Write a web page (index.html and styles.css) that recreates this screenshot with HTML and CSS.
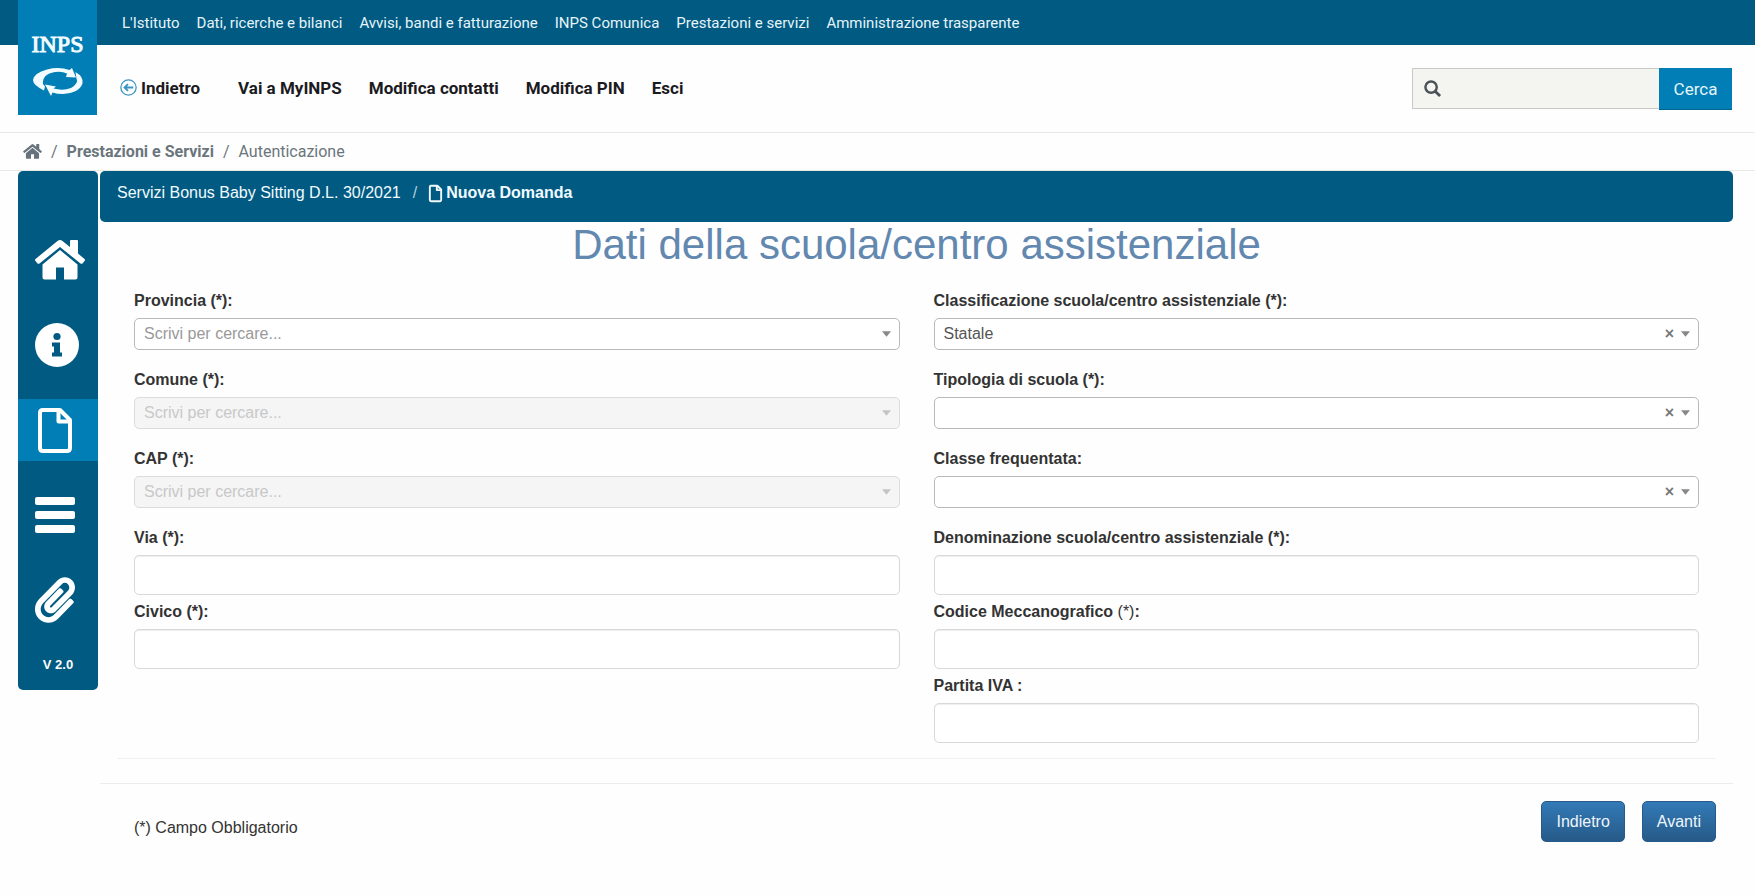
FILE: index.html
```html
<!DOCTYPE html>
<html lang="it">
<head>
<meta charset="utf-8">
<title>INPS - Bonus Baby Sitting</title>
<link rel="stylesheet" href="styles.css">
</head>
<body>
<header class="site-header">
  <a class="logo" href="#" aria-label="INPS">
    <span class="logo-name">INPS</span>
    <svg class="logo-mark" viewBox="0 0 50 28" fill="currentColor" aria-hidden="true">
      <path d="M10 16Q9 6 22 4Q29 3 34 5.500L33 9L43 9.500L39 0L36.500 2Q26-1.500 14 1.500Q1 5 0 12Q0 17 11 22.500L12 18.500Z"/>
      <path d="M42.500 4Q51 9 49.500 15.500Q46 25 30 26Q24 26 19.500 24.500L18 28L12 16.500L23 18.500L20.500 20.500Q30 23 38 20Q46 15 43.500 10.500Z"/>
    </svg>
  </a>
  <nav class="top-nav" aria-label="Istituzionale">
    <a href="#">L'Istituto</a>
    <a href="#">Dati, ricerche e bilanci</a>
    <a href="#">Avvisi, bandi e fatturazione</a>
    <a href="#">INPS Comunica</a>
    <a href="#">Prestazioni e servizi</a>
    <a href="#">Amministrazione trasparente</a>
  </nav>
  <div class="main-bar">
    <nav class="user-nav" aria-label="Utente">
      <a class="back-link" href="#"><svg class="back-icon" viewBox="0 0 16 16" fill="none" stroke="currentColor" stroke-width="1.200" aria-hidden="true"><circle cx="8" cy="8" r="7.200"/><path stroke-width="1.800" d="M12.500 8H4.500M7.500 4.800 4.300 8l3.200 3.200"/></svg>Indietro</a>
      <a href="#">Vai a MyINPS</a>
      <a href="#">Modifica contatti</a>
      <a href="#">Modifica PIN</a>
      <a href="#">Esci</a>
    </nav>
    <form class="search">
      <label class="search-box">
        <svg class="search-icon" viewBox="0 0 18 18" fill="none" stroke="currentColor" aria-hidden="true"><circle cx="7.500" cy="7.500" r="6" stroke-width="2.600"/><path d="M11.800 11.800 17 17" stroke-width="3"/></svg>
        <input type="search" aria-label="Cerca nel sito">
      </label>
      <button type="button">Cerca</button>
    </form>
  </div>
</header>

<nav class="breadcrumb" aria-label="Percorso">
  <a href="#" aria-label="Home"><svg class="crumb-home" viewBox="0 0 50 40" aria-hidden="true"><use href="#house"/></svg></a>
  <span>/</span>
  <a class="crumb-strong" href="#">Prestazioni e Servizi</a>
  <span>/</span>
  <span>Autenticazione</span>
</nav>

<div class="page">
  <nav class="sidebar" aria-label="Menu servizio">
    <a href="#" aria-label="Home"><svg class="icon-house" viewBox="0 0 50 40" fill="currentColor"><g id="house"><path d="M22.500 1 Q25 -1 27.500 1 L35 7 V1 Q35 0 36 0 H42 Q43 0 43 1 V13.500 L49.500 19 Q50.500 20 49.500 21 L47.500 23.500 Q46.500 24 45.500 23.500 L25 7 L4.500 23.500 Q3.500 24 2.500 23.500 L.5 21 Q-.5 20 .5 19 Z"/><path d="M25 10 L42.500 24.500 V37.500 Q42.500 39.500 40.500 39.500 H29 V27.500 H21 V39.500 H9.500 Q7.500 39.500 7.500 37.500 V24.500 Z"/></g></svg></a>
    <a href="#" aria-label="Informazioni"><svg class="icon-info" viewBox="0 0 44 44"><circle cx="22" cy="22" r="22" fill="currentColor"/><g class="cutout"><circle cx="22" cy="13.500" r="3.600"/><path d="M17 19.500H25V29.500H27V33.500H17V29.500H19V23.500H17Z"/></g></svg></a>
    <a class="active" href="#" aria-label="Nuova domanda"><svg class="icon-file" viewBox="0 0 34 45" fill="none" stroke="currentColor" stroke-width="4" stroke-linejoin="round"><path id="sheet" d="M5 2H22L32 12V40Q32 43 29 43H5Q2 43 2 40V5Q2 2 5 2Z"/><path d="M20.500 3V13.500H31"/></svg></a>
    <a href="#" aria-label="Elenco domande"><svg class="icon-bars" viewBox="0 0 40 36" fill="currentColor"><rect width="40" height="8" rx="2"/><rect y="14" width="40" height="8" rx="2"/><rect y="28" width="40" height="8" rx="2"/></svg></a>
    <a href="#" aria-label="Allegati"><svg class="icon-clip" viewBox="0 0 448 512" fill="currentColor"><path d="M43.246 466.142c-58.430-60.289-57.341-157.511 1.386-217.581L254.392 34c44.316-45.332 116.351-45.336 160.671 0 43.890 44.894 43.943 117.329 0 162.276L232.214 383.128c-29.855 30.537-78.633 30.111-107.982-.998-28.275-29.970-27.368-77.473 1.452-106.953l143.743-146.835c6.182-6.314 16.312-6.422 22.626-.241l22.861 22.379c6.315 6.182 6.422 16.312.241 22.626L171.427 319.927c-4.932 5.045-5.236 13.428-.648 18.292 4.372 4.634 11.245 4.711 15.688.165l182.849-186.851c19.613-20.062 19.613-52.725-.011-72.798-19.189-19.627-49.957-19.637-69.154 0L90.390 293.295c-34.763 35.560-35.299 93.120-1.191 128.313 34.010 35.093 88.985 35.137 123.058.286l172.060-175.999c6.177-6.319 16.307-6.433 22.626-.256l22.877 22.364c6.319 6.177 6.434 16.307.256 22.626l-172.060 175.998c-59.576 60.938-155.943 60.216-214.770-.485z"/></svg></a>
    <span class="version">V 2.0</span>
  </nav>

  <main class="content">
    <div class="service-bar">
      <span>Servizi Bonus Baby Sitting D.L. 30/2021</span>
      <span class="slash">/</span>
      <strong><svg class="bar-file" viewBox="0 0 34 45" fill="none" stroke="currentColor" stroke-width="5" stroke-linejoin="round" aria-hidden="true"><use href="#sheet"/><path d="M20.500 3V13.500H31"/></svg>Nuova Domanda</strong>
    </div>
    <h1>Dati della scuola/centro assistenziale</h1>
    <form>
      <div class="columns">
        <div class="column">
          <div class="field field-select">
            <label for="provincia">Provincia (*):</label>
            <div class="combo"><select id="provincia" class="hint"><option>Scrivi per cercare...</option></select><svg class="caret" viewBox="0 0 10 6"><path d="M0 0H10L5 6Z"/></svg></div>
          </div>
          <div class="field field-select">
            <label for="comune">Comune (*):</label>
            <div class="combo"><select id="comune" disabled><option>Scrivi per cercare...</option></select><svg class="caret" viewBox="0 0 10 6"><path d="M0 0H10L5 6Z"/></svg></div>
          </div>
          <div class="field field-select">
            <label for="cap">CAP (*):</label>
            <div class="combo"><select id="cap" disabled><option>Scrivi per cercare...</option></select><svg class="caret" viewBox="0 0 10 6"><path d="M0 0H10L5 6Z"/></svg></div>
          </div>
          <div class="field">
            <label for="via">Via (*):</label>
            <input id="via" type="text">
          </div>
          <div class="field">
            <label for="civico">Civico (*):</label>
            <input id="civico" type="text">
          </div>
        </div>
        <div class="column">
          <div class="field field-select">
            <label for="classificazione">Classificazione scuola/centro assistenziale (*):</label>
            <div class="combo"><select id="classificazione"><option>Statale</option></select><button class="clear" type="button" aria-label="Cancella">×</button><svg class="caret" viewBox="0 0 10 6"><path d="M0 0H10L5 6Z"/></svg></div>
          </div>
          <div class="field field-select">
            <label for="tipologia">Tipologia di scuola (*):</label>
            <div class="combo"><select id="tipologia"><option></option></select><button class="clear" type="button" aria-label="Cancella">×</button><svg class="caret" viewBox="0 0 10 6"><path d="M0 0H10L5 6Z"/></svg></div>
          </div>
          <div class="field field-select">
            <label for="classe">Classe frequentata:</label>
            <div class="combo"><select id="classe"><option></option></select><button class="clear" type="button" aria-label="Cancella">×</button><svg class="caret" viewBox="0 0 10 6"><path d="M0 0H10L5 6Z"/></svg></div>
          </div>
          <div class="field">
            <label for="denominazione">Denominazione scuola/centro assistenziale (*):</label>
            <input id="denominazione" type="text">
          </div>
          <div class="field">
            <label for="codice">Codice Meccanografico <span class="light">(*)</span>:</label>
            <input id="codice" type="text">
          </div>
          <div class="field">
            <label for="piva">Partita IVA :</label>
            <input id="piva" type="text">
          </div>
        </div>
      </div>
      <div class="form-footer">
        <p>(*) Campo Obbligatorio</p>
        <div class="actions">
          <button type="button">Indietro</button>
          <button type="button">Avanti</button>
        </div>
      </div>
    </form>
  </main>
</div>
</body>
</html>
```
FILE: styles.css
```css
* { box-sizing: border-box; }

body {
  margin: 0;
  background: #fefefe;
  color: #333;
  font: 16px/22px "Liberation Sans", Arial, sans-serif;
}

a { color: inherit; text-decoration: none; }
svg { display: block; flex: none; overflow: visible; }

.site-header {
  position: relative;
  font-family: Roboto, sans-serif;
  border-bottom: 1px solid #e8e8e4;
}

.logo {
  position: absolute;
  top: 0;
  left: 18px;
  width: 79px;
  height: 115px;
  padding-top: 28px;
  display: flex;
  flex-direction: column;
  align-items: center;
  gap: 8px;
  background: #007eb5;
  color: #f2fbff;
}
.logo-name { font: 24px/32px "Liberation Serif", serif; -webkit-text-stroke: 1px currentColor; }
.logo-mark { width: 50px; height: 28px; }

.top-nav {
  height: 45px;
  padding-left: 122px;
  display: flex;
  align-items: center;
  gap: 17px;
  background: #005a82;
  color: #e6f4fa;
  font-size: 15px;
}

.main-bar {
  height: 87px;
  padding: 0 23px 0 120px;
  display: flex;
  align-items: center;
  justify-content: space-between;
}
.user-nav {
  display: flex;
  gap: 27px;
  padding-bottom: 2px;
  color: #1b1b1f;
  font-size: 17px;
  font-weight: 700;
}
.back-link { display: flex; align-items: center; gap: 4px; margin-right: 11px; }
.back-icon { width: 17px; height: 17px; color: #3d94c2; }

.search { display: flex; align-items: flex-start; }
.search-box {
  height: 41px;
  width: 247px;
  padding-left: 11px;
  display: flex;
  align-items: center;
  border: 1px solid #c9cac6;
  border-right: 0;
  background: #f4f5f0;
}
.search-icon { width: 17px; height: 17px; color: #4b5257; }
.search-box input { flex: 1; min-width: 0; border: 0; background: none; font: inherit; outline: 0; }
.search button {
  height: 42px;
  width: 73px;
  padding: 2px 0 0;
  border: 0;
  border-bottom: 1px solid #00658f;
  background: #007eb5;
  color: #e6f4fa;
  font: 17px/22px Roboto, sans-serif;
}

.breadcrumb {
  height: 38px;
  padding-left: 23px;
  display: flex;
  align-items: center;
  gap: 9px;
  border-bottom: 1px solid #e8e8e4;
  color: #6b757c;
  font-family: Roboto, sans-serif;
}
.crumb-home { width: 19px; height: 15px; fill: #66727c; }
.crumb-strong { font-weight: 700; }

.page { display: flex; align-items: flex-start; gap: 2px; padding: 0 22px 0 18px; }

.sidebar {
  width: 80px;
  flex: none;
  padding: 58px 0 14px;
  display: flex;
  flex-direction: column;
  gap: 23px;
  border-radius: 5px;
  background: #005a82;
  color: #fff;
}
.sidebar a { height: 62px; padding-left: 17px; display: flex; align-items: center; }
.sidebar .active { padding-left: 20px; background: #007eb5; }
.icon-house { width: 50px; height: 40px; }
.icon-info { width: 44px; height: 44px; }
.icon-file { width: 34px; height: 45px; }
.icon-bars { width: 40px; height: 36px; }
.icon-clip { width: 40px; height: 46px; }
.cutout { fill: #005a82; }
.version { text-align: center; font-size: 13px; font-weight: 700; }

.content { flex: 1; min-width: 0; }

.service-bar {
  height: 51px;
  padding: 11px 17px;
  display: flex;
  align-items: flex-start;
  gap: 12px;
  border-radius: 5px;
  background: #005a82;
  color: #f2fbff;
}
.service-bar strong { display: flex; align-items: center; gap: 4px; }
.slash { color: #b5d0dd; }
.bar-file { width: 13px; height: 17px; }

h1 {
  margin: 0 0 22px;
  color: #6288b0;
  font-size: 42px;
  line-height: 46px;
  font-weight: 400;
  text-align: center;
}

.columns {
  margin: 0 17px 24px;
  padding: 0 17px 15px;
  display: grid;
  grid-template-columns: 1fr 1fr;
  gap: 34px;
  border-bottom: 1px solid #f1f1f1;
}
.field { display: flex; flex-direction: column; gap: 6px; margin-bottom: 6px; }
.field:last-child { margin-bottom: 0; }
.field-select { margin-bottom: 19px; }
.field label { font-weight: 700; }
.light { font-weight: 400; }
.field > input {
  height: 40px;
  padding: 0 12px;
  border: 1px solid #d8d8d8;
  border-radius: 5px;
  background: #fff;
  box-shadow: inset 0 1px 1px #00000012;
  font: inherit;
}

.combo { position: relative; }
.combo select {
  display: block;
  width: 100%;
  height: 32px;
  padding: 0 48px 0 9px;
  border: 1px solid #b9b9b9;
  border-radius: 5px;
  background: #fff;
  color: #555;
  font: inherit;
  appearance: none;
}
.combo .hint { color: #999; }
.combo select:disabled { border-color: #dcdcdc; background: #f5f5f5; color: #c8c8c8; opacity: 1; }
.combo select:disabled ~ .caret { fill: #c4c4c4; }
.caret {
  position: absolute;
  top: 13px;
  right: 9px;
  width: 9px;
  height: 6px;
  fill: #888;
  pointer-events: none;
}
.clear {
  position: absolute;
  top: 6px;
  right: 25px;
  padding: 0;
  border: 0;
  background: none;
  color: #777;
  font: 700 16px/20px "Liberation Sans", Arial, sans-serif;
}

.form-footer {
  padding: 17px 17px 0 34px;
  display: flex;
  align-items: flex-start;
  justify-content: space-between;
  border-top: 1px solid #ececec;
}
.form-footer p { margin: 16px 0 0; }
.actions { display: flex; gap: 17px; }
.actions button {
  height: 41px;
  padding: 0 14px;
  border: 1px solid #265a8a;
  border-radius: 5px;
  background: linear-gradient(#337ab7, #265a88);
  color: #eef6fc;
  font: inherit;
}
```
